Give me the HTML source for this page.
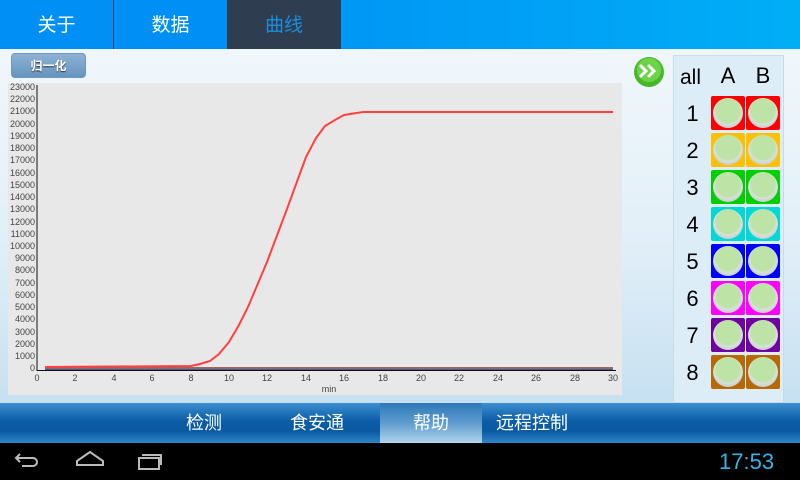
<!DOCTYPE html>
<html><head><meta charset="utf-8"><style>
*{margin:0;padding:0;box-sizing:border-box}
body{width:800px;height:480px;overflow:hidden;position:relative;font-family:"Liberation Sans","Noto Sans CJK SC",sans-serif;background:linear-gradient(#f4f9fc 0%,#e2eff8 50%,#b9d9ee 100%)}
.top{position:absolute;left:0;top:0;width:800px;height:49px;background:#0090f5}
.tab{position:absolute;top:0;height:49px;color:#fff;font-size:19px;line-height:51px;text-align:center}
.nav{position:absolute;left:0;top:403px;width:800px;height:40px;background:linear-gradient(#3d8fd0,#0b5da6 45%,#0a5aa2 70%,#2f86c8)}
.nav span{position:absolute;top:0;line-height:41px;color:#fff;font-size:18px}
.sys{position:absolute;left:0;top:443px;width:800px;height:37px;background:#000}
.panel{position:absolute;left:673px;top:55px;width:111px;height:348px;background:#dcedf8;border:1px solid #c8dbe8}
.lab{position:absolute;font-size:22px;color:#000;text-align:center}
.w{position:absolute;width:34px;height:34px;border-radius:2px}
.w::after{content:"";position:absolute;left:2px;top:2px;width:30px;height:30px;border-radius:50%;background:radial-gradient(circle at 50% 42%,#bde3a6 52%,#d8e0dc 60%,#a9b3b0 100%)}
</style></head><body>
<div class="top">
<div class="tab" style="left:0;width:113px">关于</div>
<div style="position:absolute;left:113px;top:0;width:1px;height:49px;background:#1d3d5a"></div>
<div class="tab" style="left:114px;width:113px">数据</div>
<div class="tab" style="left:227px;width:114px;background:#2e3d50;color:#1b8de0">曲线</div>
<div style="position:absolute;left:341px;top:0;width:459px;height:49px;background:linear-gradient(90deg,#0097f5,#00aef6)"></div>
</div>
<div style="position:absolute;left:11px;top:53px;width:75px;height:25px;border-radius:4px;background:linear-gradient(#8db2d3,#6694bf);border:1px solid #6f98bf;color:#fff;font-size:12px;font-weight:bold;text-align:center;line-height:24px;text-shadow:0 1px 1px #333">归一化</div>
<svg style="position:absolute;left:0;top:0" width="800" height="480">
<rect x="8" y="83" width="614" height="312" fill="#e8e8e8"/>
<g font-family="Liberation Sans" font-size="9" fill="#444" text-anchor="end">
<text x="35" y="90">23000</text><text x="35" y="102">22000</text><text x="35" y="114">21000</text><text x="35" y="127">20000</text><text x="35" y="139">19000</text><text x="35" y="151">18000</text><text x="35" y="163">17000</text><text x="35" y="176">16000</text><text x="35" y="188">15000</text><text x="35" y="200">14000</text><text x="35" y="212">13000</text><text x="35" y="225">12000</text><text x="35" y="237">11000</text><text x="35" y="249">10000</text><text x="35" y="261">9000</text><text x="35" y="273">8000</text><text x="35" y="286">7000</text><text x="35" y="298">6000</text><text x="35" y="310">5000</text><text x="35" y="322">4000</text><text x="35" y="335">3000</text><text x="35" y="347">2000</text><text x="35" y="359">1000</text><text x="35" y="371">0</text>
</g>
<g font-family="Liberation Sans" font-size="9" fill="#444" text-anchor="middle">
<text x="37" y="381">0</text><text x="75" y="381">2</text><text x="114" y="381">4</text><text x="152" y="381">6</text><text x="191" y="381">8</text><text x="229" y="381">10</text><text x="267" y="381">12</text><text x="306" y="381">14</text><text x="344" y="381">16</text><text x="383" y="381">18</text><text x="421" y="381">20</text><text x="459" y="381">22</text><text x="498" y="381">24</text><text x="536" y="381">26</text><text x="575" y="381">28</text><text x="613" y="381">30</text>
<text x="329" y="392">min</text></g>
<line x1="37" y1="85" x2="37" y2="371" stroke="#111" stroke-width="1"/>
<line x1="37" y1="370.5" x2="616" y2="370.5" stroke="#111" stroke-width="1"/>
<rect x="45" y="367" width="568" height="3" fill="#a0665a"/>
<line x1="45" y1="369.5" x2="613" y2="369.5" stroke="#3a5aa0" stroke-width="1"/>
<polyline fill="none" stroke="#ff4040" stroke-width="2" points="45,367 191,366 200,364 210,361 219,354 229,342 239,325 248,307 267,262 287,209 306,157 316,138 325,126 335,120 344,115 363,112 613,112"/>
<circle cx="649" cy="72" r="15" fill="#48b82a"/><circle cx="649" cy="70" r="12" fill="#6fd34a"/>
<path d="M641 66l5 5-5 5M649 66l5 5-5 5" stroke="#fff" stroke-width="3" fill="none" stroke-linecap="round"/>
</svg>
<div class="panel"></div>
<div class="lab" style="left:680px;top:66px;font-size:21px">all</div>
<div class="lab" style="left:711px;top:63px;width:34px">A</div>
<div class="lab" style="left:746px;top:63px;width:34px">B</div>
<div class="lab" style="left:680px;top:101px;width:25px">1</div><div class="w" style="left:711px;top:96px;background:#f00"></div><div class="w" style="left:746px;top:96px;background:#f00"></div>
<div class="lab" style="left:680px;top:138px;width:25px">2</div><div class="w" style="left:711px;top:133px;background:#ffc000"></div><div class="w" style="left:746px;top:133px;background:#ffc000"></div>
<div class="lab" style="left:680px;top:175px;width:25px">3</div><div class="w" style="left:711px;top:170px;background:#00d000"></div><div class="w" style="left:746px;top:170px;background:#00d000"></div>
<div class="lab" style="left:680px;top:212px;width:25px">4</div><div class="w" style="left:711px;top:207px;background:#00d8d8"></div><div class="w" style="left:746px;top:207px;background:#00d8d8"></div>
<div class="lab" style="left:680px;top:249px;width:25px">5</div><div class="w" style="left:711px;top:244px;background:#0000ff"></div><div class="w" style="left:746px;top:244px;background:#0000ff"></div>
<div class="lab" style="left:680px;top:286px;width:25px">6</div><div class="w" style="left:711px;top:281px;background:#ff00ff"></div><div class="w" style="left:746px;top:281px;background:#ff00ff"></div>
<div class="lab" style="left:680px;top:323px;width:25px">7</div><div class="w" style="left:711px;top:318px;background:#7000a0"></div><div class="w" style="left:746px;top:318px;background:#7000a0"></div>
<div class="lab" style="left:680px;top:360px;width:25px">8</div><div class="w" style="left:711px;top:355px;background:#b86800"></div><div class="w" style="left:746px;top:355px;background:#b86800"></div>
<div class="nav">
<div style="position:absolute;left:380px;top:0;width:102px;height:40px;background:linear-gradient(#2d78b8,#5f9dcf 50%,#b0d4ec)"></div>
<span style="left:186px">检测</span><span style="left:290px">食安通</span><span style="left:413px">帮助</span><span style="left:496px">远程控制</span>
</div>
<div class="sys">
<svg width="200" height="37" style="position:absolute;left:0;top:0">
<path d="M20 8l-4 4 4 4M16 12h17a4 4 0 0 1 0 8h-11" stroke="#bbb" stroke-width="2" fill="none" transform="translate(0,3)"/>
<path d="M77 20l13-9 13 9v4h-26z" stroke="#bbb" stroke-width="2" fill="none" transform="translate(0,-2)"/>
<rect x="139" y="15" width="20" height="11" stroke="#bbb" stroke-width="2" fill="none"/>
<path d="M142 12h19v10" stroke="#bbb" stroke-width="2" fill="none"/>
</svg>
<div style="position:absolute;left:719px;top:6px;font-size:22px;color:#33b5e5">17:53</div>
</div>
</body></html>
